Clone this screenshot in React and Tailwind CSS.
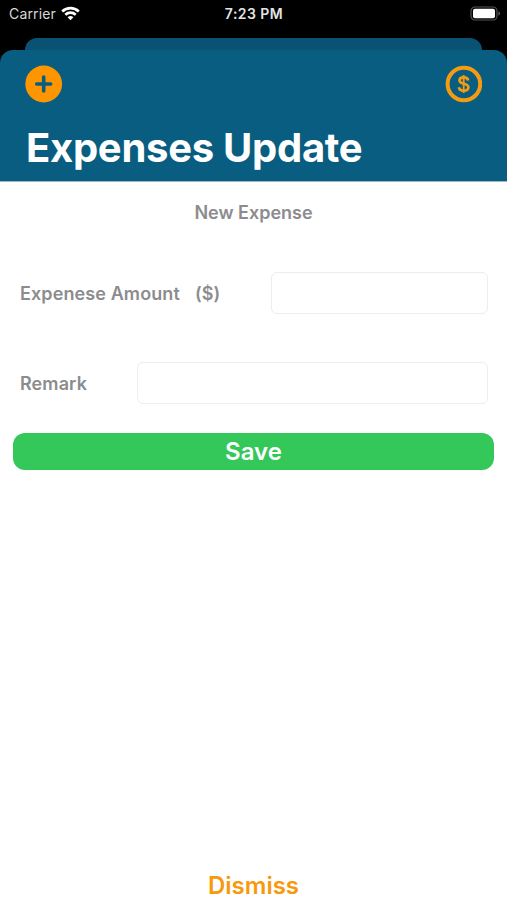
function WifiIcon() {
  return (
    <svg className="ml-[5px] h-[15px] w-[19px]" viewBox="0 0 19 15" fill="none" stroke="#fff" strokeWidth="2.7">
      <path d="M1.2 5.4C6 .9 13 .9 17.8 5.4" />
      <path d="M4.3 8.7c3-2.8 7.4-2.8 10.4 0" />
      <path d="M6.6 11.2a4.3 4.3 0 0 1 5.8 0L9.5 14.3Z" fill="#fff" stroke="none" />
    </svg>
  );
}

function BatteryIcon() {
  return (
    <svg className="h-[15px] w-[31px]" viewBox="0 0 31 15">
      <rect x="1" y="1" width="26" height="13" rx="4" fill="none" stroke="#555" strokeWidth="1.2" />
      <rect x="3" y="2.7" width="22" height="9.6" rx="2" fill="#fff" />
      <path d="M28.5 5.3c2 .8 2 3.6 0 4.4Z" fill="#666" />
    </svg>
  );
}

function StatusBar() {
  return (
    <div className="grid h-[38px] grid-cols-[1fr_80px_1fr] items-start pl-[7px] pr-[6px] pt-[6px] text-[14px] leading-[16px] text-[#d8d8d8]">
      <div className="flex items-start pl-[2px]">
        <span className="tracking-[0.15px]">Carrier</span>
        <WifiIcon />
      </div>
      <span className="text-center text-[14px] font-semibold tracking-[0.45px] text-[#e4e4e4]">7:23 PM</span>
      <div className="flex justify-end">
        <BatteryIcon />
      </div>
    </div>
  );
}

function Header() {
  return (
    <header className="h-[132px] rounded-t-[13px] border-b border-[#9bb9c8] bg-[#085d80] px-[25px] pt-[15px]">
      <div className="flex justify-between">
        <button aria-label="Add" className="h-[38px] w-[38px]">
          <svg className="h-[38px] w-[38px]" viewBox="0 0 38 38">
            <circle cx="18.7" cy="19" r="18.4" fill="#ff9500" />
            <path d="M18.7 12v14M11.7 19h14" stroke="#085d80" strokeWidth="3.6" strokeLinecap="round" />
          </svg>
        </button>
        <button aria-label="Currency" className="h-[38px] w-[38px]">
          <svg className="h-[38px] w-[38px]" viewBox="0 0 38 38" fill="none" stroke="#f49b12">
            <circle cx="19.9" cy="19" r="16.3" strokeWidth="4" />
            <path d="M24.2 15.5c-.4-2-2.1-3.1-4.5-3.1-2.5 0-4.2 1.2-4.2 3.1 0 2 1.7 2.6 4.2 3.2 2.8.7 4.7 1.3 4.7 3.5 0 2.1-1.8 3.4-4.6 3.4s-4.6-1.3-4.9-3.4" strokeWidth="2.7" />
            <path d="M19.7 10v18" strokeWidth="1.8" />
          </svg>
        </button>
      </div>
      <h1 className="ml-[1px] mt-[21px] whitespace-nowrap text-[40px] font-bold leading-[48px] tracking-[-0.28px] text-white">Expenses Update</h1>
    </header>
  );
}

function Field({ label, id, unit, inputClass }) {
  return (
    <div className="flex h-[42px] items-center justify-between pl-[20px] pr-[19px]">
      <label htmlFor={id} className="flex pt-[2px] text-[18px] font-semibold leading-[22px] tracking-[0.1px] text-[#8c8c8f]">
        <span>{label}</span>
        {unit && <span className="ml-[15px]">{unit}</span>}
      </label>
      <input id={id} className={`h-[42px] rounded-[6px] border border-[#ededed] bg-white outline-none ${inputClass}`} />
    </div>
  );
}

export default function App() {
  return (
    <div className="flex h-[900px] w-[507px] flex-col overflow-hidden bg-black font-['Inter',sans-serif]">
      <StatusBar />
      <div className="mx-[25px] h-[26px] shrink-0 rounded-t-[12px] bg-[#095273]" />
      <main className="relative -mt-[14px] flex flex-1 flex-col">
        <Header />
        <div className="flex flex-1 flex-col bg-white">
          <h2 className="mt-[20px] text-center text-[18px] font-semibold leading-[22px] text-[#8c8c8f]">New Expense</h2>
          <div className="mt-[48px] flex flex-col gap-[48px]">
            <Field id="amount" label="Expenese Amount" unit="($)" inputClass="w-[217px]" />
            <Field id="remark" label="Remark" inputClass="w-[351px]" />
          </div>
          <button className="mx-[13px] mt-[29px] h-[37px] rounded-[12px] bg-[#34c759] text-[24px] font-semibold leading-[37px] text-white">Save</button>
          <button className="mt-auto h-[29px] self-center text-[24px] font-semibold leading-[29px] text-[#f7990c]">Dismiss</button>
        </div>
      </main>
    </div>
  );
}
